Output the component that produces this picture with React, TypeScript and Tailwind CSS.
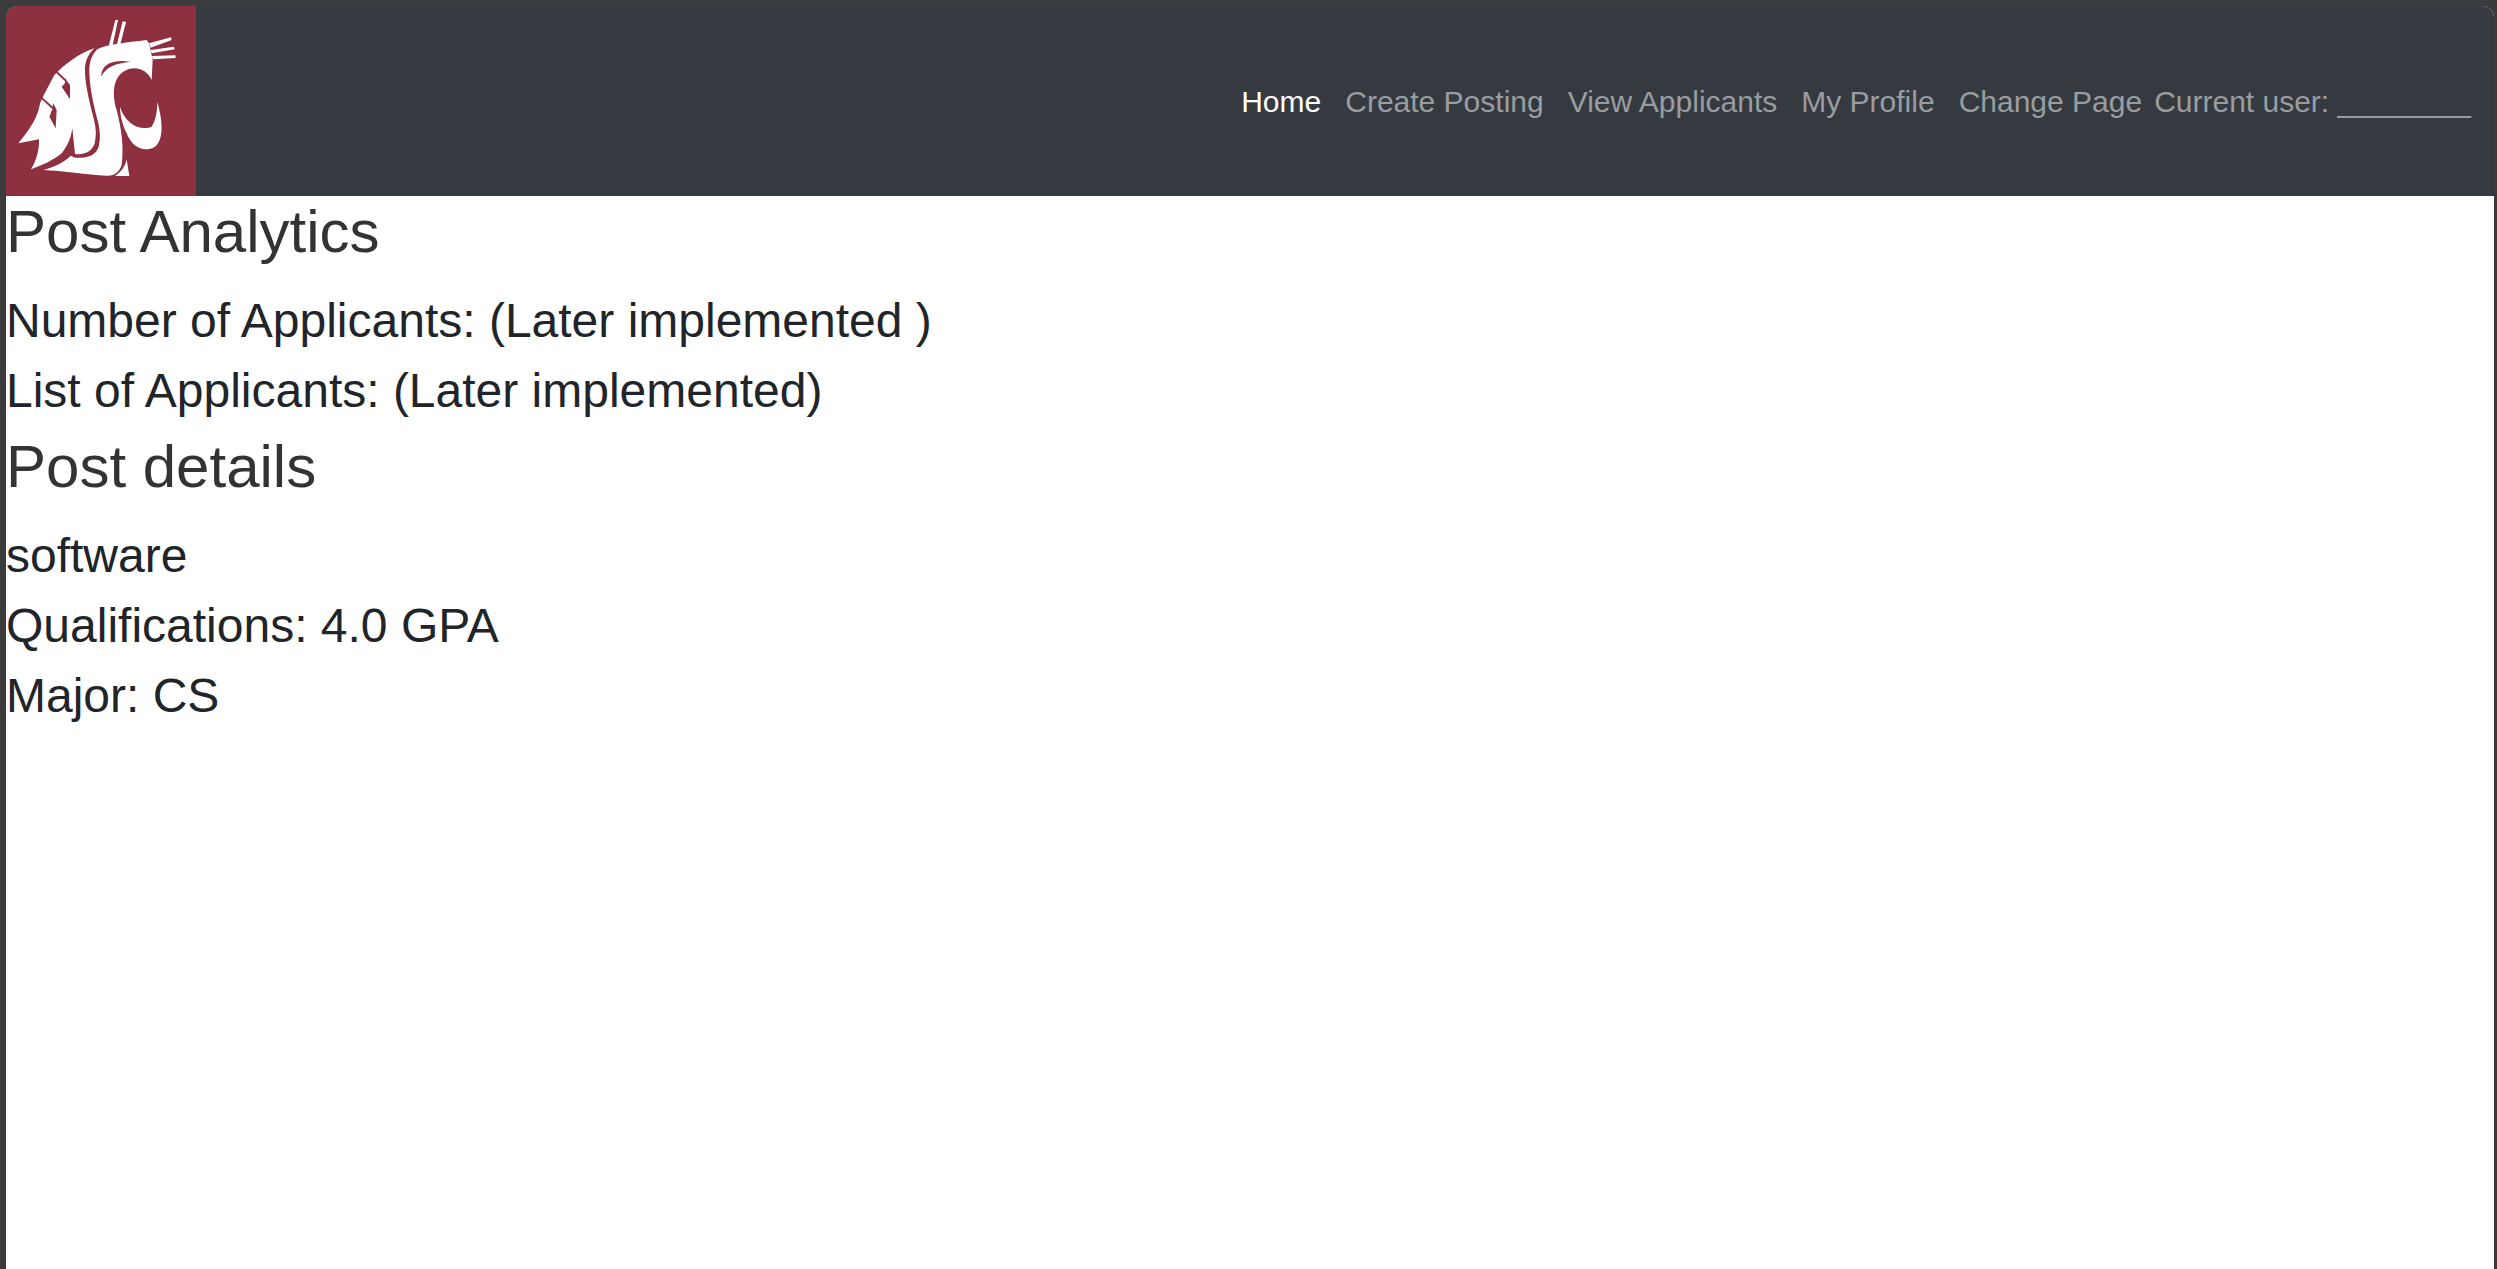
import React from 'react';

const font = "font-['Liberation_Sans',Arial,sans-serif]";
const maroon = '#8f3040';

const Logo = () => (
  <svg viewBox="18 18 570 570" className="w-[190px] h-[190px] shrink-0 block rounded-tl-[12px] bg-[#8f3040]">
    <g fill="#fff">
      {/* ears */}
      <polygon points="346,60 354,60 338,135 327,135" />
      <polygon points="368,64 378,66 361,133 351,133" />
      {/* whiskers */}
      <polygon points="447,130 513,112 515,120 452,143" />
      <polygon points="452,150 522,140 524,148 455,160" />
      <polygon points="456,168 526,166 527,174 458,178" />
      {/* head and S */}
      <path d="M292,148 C320,132 380,128 440,120 L447,130 L458,180 L455,240 C440,205 400,195 370,215 C340,235 335,280 350,330 C365,390 372,440 365,495 C358,515 345,528 320,527 C260,525 190,512 130,510 C165,500 195,485 212,467 L225,473 C265,475 288,465 296,440 C302,415 300,395 295,370 C285,330 270,275 268,220 C267,185 275,165 292,148 Z" />
      {/* jaw */}
      <path d="M360,320 C375,370 420,395 455,380 C468,360 472,330 472,305 C490,370 490,420 465,440 C430,460 395,440 380,400 C365,370 360,340 360,320 Z" />
      <path d="M380,478 L388,528 L345,528 C365,515 375,500 380,478 Z" />
      {/* mane */}
      <path d="M283,145 C250,155 210,180 173,215 L163,225 L130,288 L120,310 C115,340 105,370 55,430 L117,418 C118,450 110,480 93,508 C130,495 160,480 185,460 C200,440 212,420 217,385 L225,462 C250,465 275,458 284,430 C290,405 288,385 282,360 C270,310 256,260 255,215 C254,185 263,165 283,145 Z" />
    </g>
    {/* mane cuts and eye */}
    <g fill={maroon}>
      <polygon points="171,213 197,238 194,243 168,218" />
      <polygon points="195,235 210,255 210,298 185,260 195,250" />
      <polygon points="125,290 160,322 157,327 122,295" />
      <polygon points="160,310 170,330 167,385 148,350 156,330" />
      <path d="M303,230 C305,190 340,178 392,185 C345,190 320,200 303,230 Z" />
    </g>
  </svg>
);

const navLinks = ['Create Posting', 'View Applicants', 'My Profile', 'Change Page'];

export default function App() {
  return (
    <div className={`h-[1269px] overflow-hidden bg-[#3b3b3b] pt-[6px] pl-[6px] pr-[3px] ${font}`}>
      <div className="h-full bg-white rounded-t-[12px] overflow-hidden">
        <nav className="flex items-start justify-between bg-[#343a40] h-[190px]">
          <Logo />
          <div className="flex items-center pt-[73px] pr-[23px] text-[30px] leading-[45px]">
            <a className="text-white px-[12px]">Home</a>
            {navLinks.map((l) => (
              <a key={l} className="text-[#9a9da0] px-[12px]">{l}</a>
            ))}
            <span className="text-[#9a9da0]">Current user: ________</span>
          </div>
        </nav>
        <main>
          <h2 className="text-[60px] leading-[72px] font-normal text-[#333] mb-[18px]">Post Analytics</h2>
          <p className="text-[48px] leading-[70px] text-[#212529]">Number of Applicants: (Later implemented )</p>
          <p className="text-[48px] leading-[70px] text-[#212529]">List of Applicants: (Later implemented)</p>
          <h2 className="text-[60px] leading-[72px] font-normal text-[#333] mt-[5px] mb-[18px]">Post details</h2>
          <p className="text-[48px] leading-[70px] text-[#212529]">software</p>
          <p className="text-[48px] leading-[70px] text-[#212529]">Qualifications: 4.0 GPA</p>
          <p className="text-[48px] leading-[70px] text-[#212529]">Major: CS</p>
        </main>
      </div>
    </div>
  );
}
